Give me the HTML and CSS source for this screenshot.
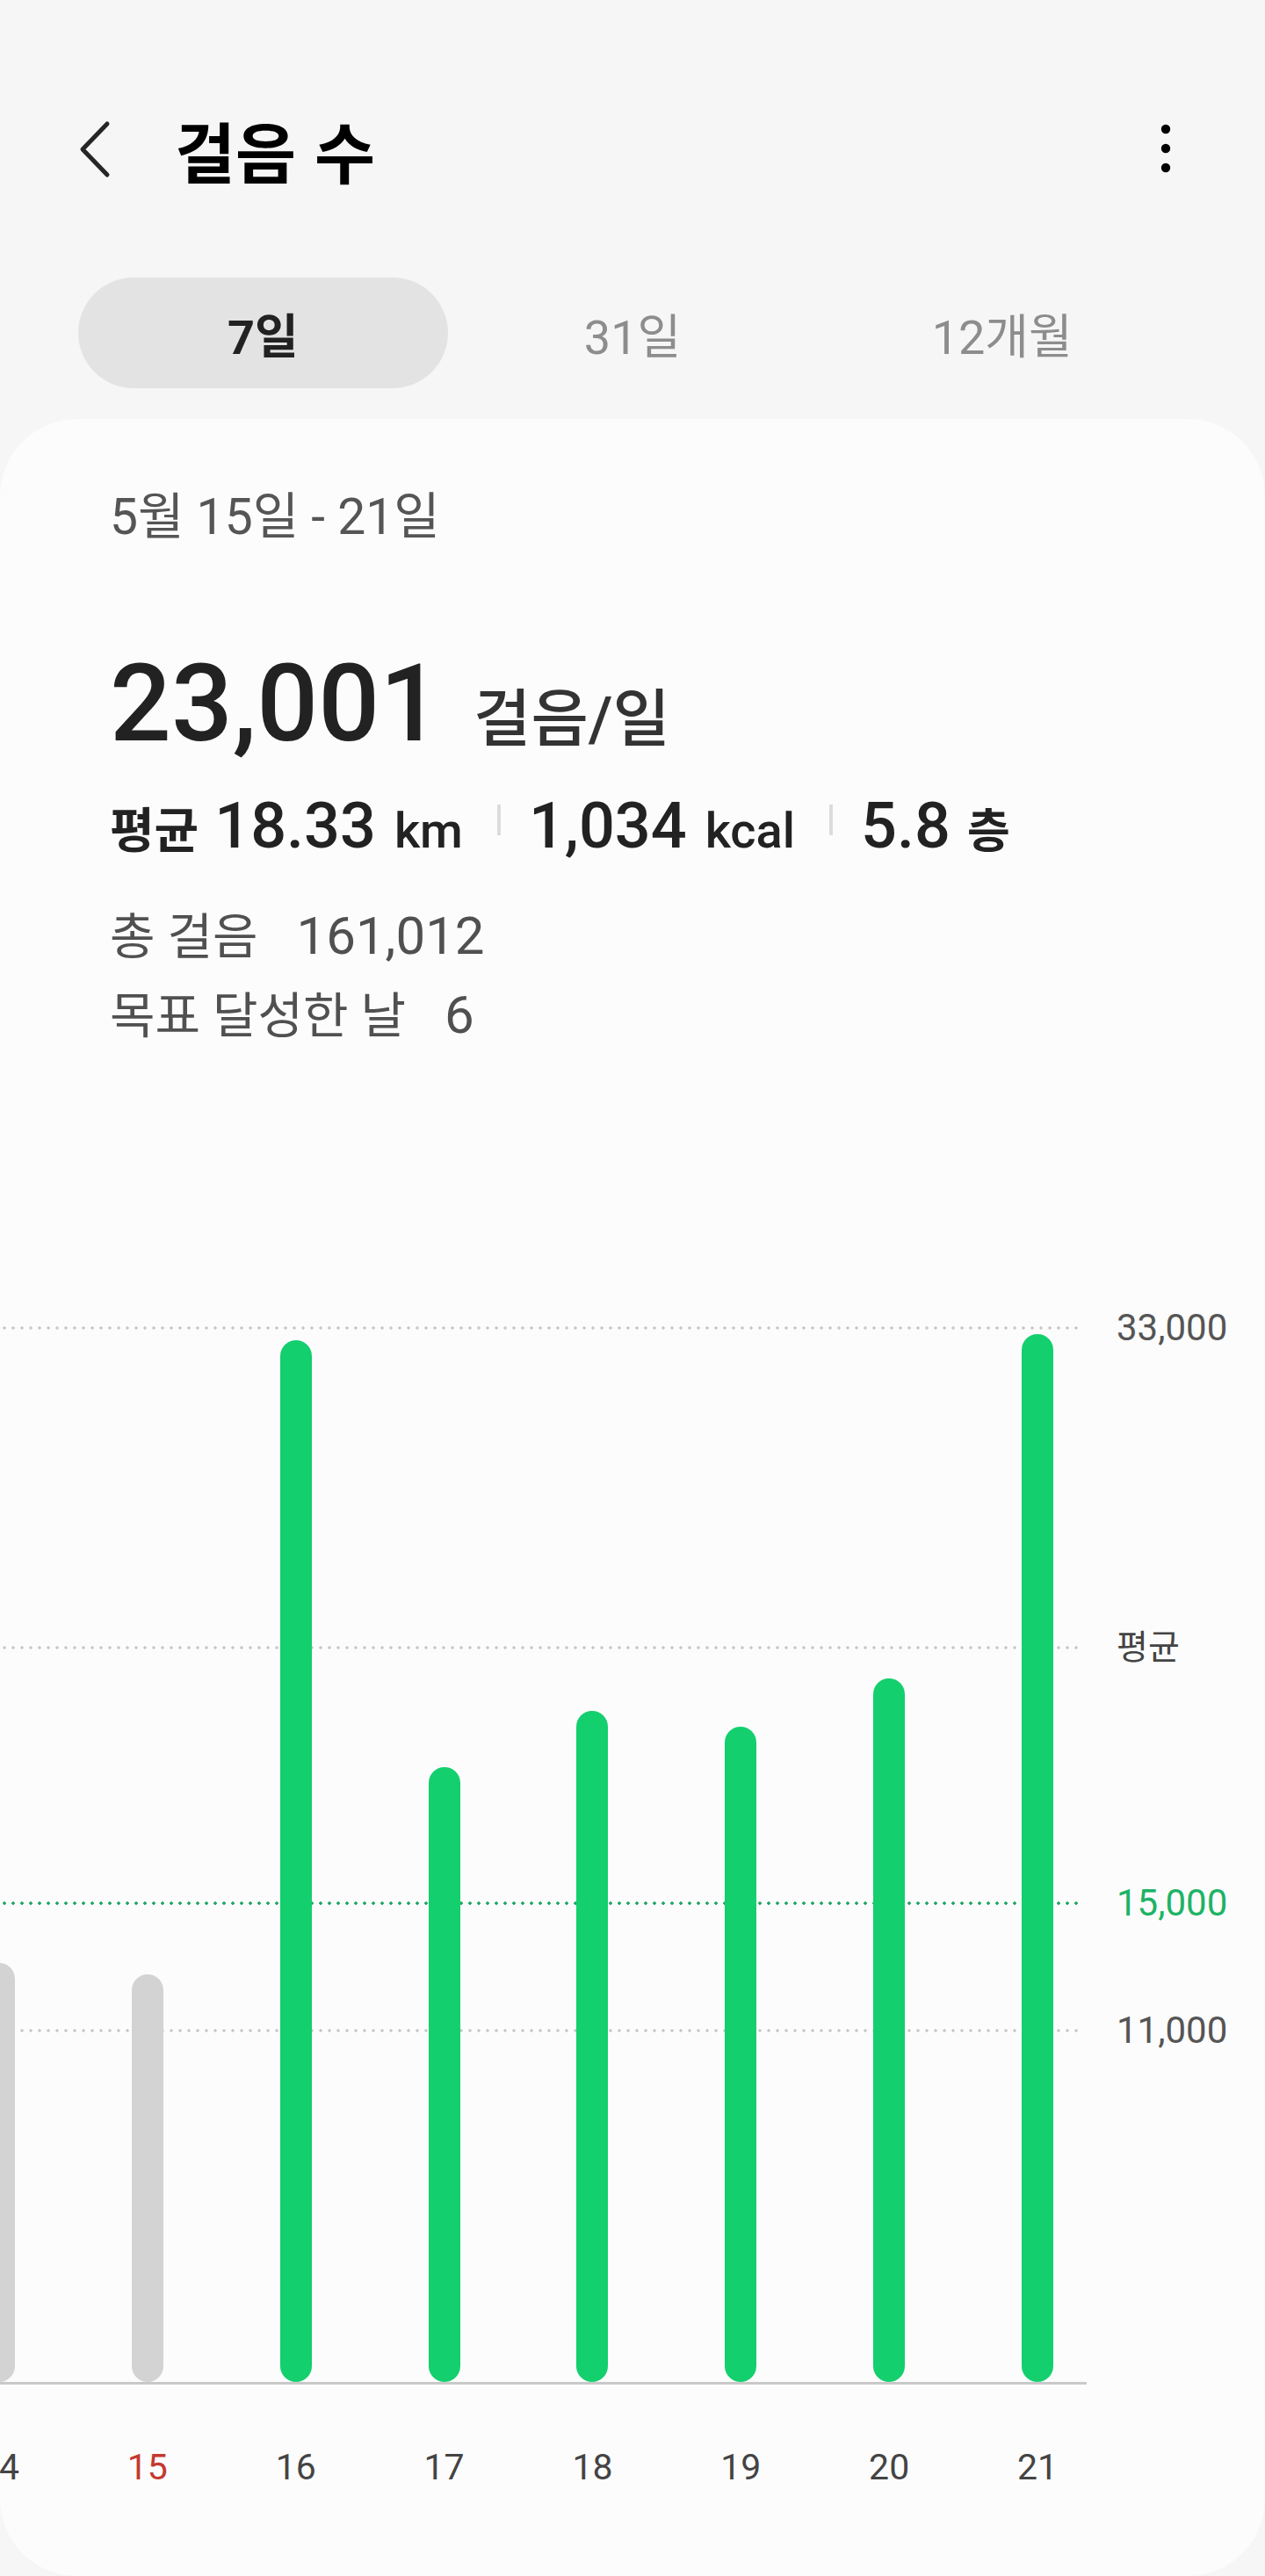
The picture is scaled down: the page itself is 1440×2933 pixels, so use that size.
FILE: index.html
```html
<!DOCTYPE html>
<html lang="ko">
<head>
<meta charset="utf-8">
<title>걸음 수</title>
<link rel="stylesheet" href="styles.css">
</head>
<body>
<div class="screen">
  <header class="appbar">
    <div class="back" aria-label="뒤로">
      <svg width="40" height="70" viewBox="0 0 40 70"><polyline points="34,6 6,35 34,64" fill="none" stroke="#262626" stroke-width="5" stroke-linecap="round" stroke-linejoin="round"/></svg>
    </div>
    <h1 class="title">걸음 수</h1>
    <div class="more" aria-label="더보기">
      <svg width="20" height="60" viewBox="0 0 20 60"><circle cx="10" cy="7" r="5.2"/><circle cx="10" cy="29" r="5.2"/><circle cx="10" cy="51" r="5.2"/></svg>
    </div>
  </header>

  <nav class="tabs">
    <div class="tab active">7일</div>
    <div class="tab">31일</div>
    <div class="tab">12개월</div>
  </nav>

  <main class="card">
    <section class="summary">
      <div class="date">5월 15일 - 21일</div>
      <div class="headline"><span class="big">23,001</span><span class="unit">걸음/일</span></div>
      <div class="stats"><span class="k">평균</span><span class="v first">18.33</span><span class="u">km</span><i class="sep"></i><span class="v">1,034</span><span class="u">kcal</span><i class="sep"></i><span class="v">5.8</span><span class="u ko">층</span></div>
      <div class="totals">
        <div class="row"><span class="label">총 걸음</span><span class="val">161,012</span></div>
        <div class="row"><span class="label">목표 달성한 날</span><span class="val">6</span></div>
      </div>
    </section>

    <section class="chart">
      <div class="plot">
        <div class="gline" style="top:111px"></div>
        <div class="gline" style="top:475px"></div>
        <div class="gline goal" style="top:766px"></div>
        <div class="gline" style="top:911px"></div>
        <div class="bars">
          <div class="bar off" style="height:477px"></div>
          <div class="bar off" style="height:464px"></div>
          <div class="bar" style="height:1186px"></div>
          <div class="bar" style="height:700px"></div>
          <div class="bar" style="height:764px"></div>
          <div class="bar" style="height:746px"></div>
          <div class="bar" style="height:801px"></div>
          <div class="bar" style="height:1193px"></div>
        </div>
      </div>
      <div class="ylabel" style="top:111px">33,000</div>
      <div class="ylabel ko" style="top:475px">평균</div>
      <div class="ylabel goal" style="top:766px">15,000</div>
      <div class="ylabel" style="top:911px">11,000</div>
      <div class="days">
        <span>14</span><span class="sun">15</span><span>16</span><span>17</span><span>18</span><span>19</span><span>20</span><span>21</span>
      </div>
    </section>
  </main>
</div>
</body>
</html>
```

FILE: styles.css
```css
* { box-sizing: border-box; }

html, body {
  margin: 0;
  padding: 0;
}

body {
  width: 1440px;
  height: 2933px;
  overflow: hidden;
  background: #f6f6f6;
  font-family: Roboto, "Noto Sans CJK KR", sans-serif;
  color: #222;
}

.screen {
  padding-top: 100px;
}

/* App bar */
.appbar {
  display: flex;
  align-items: center;
  height: 140px;
  padding-left: 88px;
  padding-right: 103px;
}

.back, .more {
  display: flex;
  align-items: center;
}

.more svg { fill: #000; }

.title {
  margin: 0 0 0 71px;
  font-family: "Noto Sans CJK KR", sans-serif;
  font-size: 75px;
  line-height: 1;
  font-weight: 700;
  color: #000;
}

.more { margin-left: auto; }

/* Tabs */
.tabs {
  display: grid;
  grid-template-columns: repeat(3, 1fr);
  margin: 76px 89px 0;
  height: 126px;
}

.tab {
  display: flex;
  align-items: center;
  justify-content: center;
  border-radius: 63px;
  font-size: 54px;
  color: #8d8d8d;
}

.tab.active {
  background: #e3e3e3;
  color: #222;
  font-weight: 700;
}

/* Card */
.card {
  margin-top: 35px;
  height: 2456px;
  background: #fcfcfc;
  border-radius: 88px;
  overflow: hidden;
}

.summary {
  padding: 77px 0 0 125px;
}

.date {
  font-size: 57px;
  line-height: 70px;
  color: #555;
}

.headline {
  display: flex;
  align-items: baseline;
  margin-top: 116px;
}

.big {
  font-size: 123px;
  line-height: 1;
  font-weight: 500;
  color: #222;
}

.unit {
  margin-left: 37px;
  font-size: 71px;
  line-height: 1;
  font-weight: 500;
  color: #333;
}

.stats {
  margin-top: 38px;
  font-size: 72px;
  line-height: 80px;
  font-weight: 500;
  color: #222;
  white-space: nowrap;
}

.stats .k {
  font-size: 55px;
  font-weight: 700;
}

.stats .v.first { margin-left: 18px; }

.stats .u {
  margin-left: 21px;
  font-size: 56px;
}

.stats .u.ko {
  margin-left: 19px;
  font-size: 53px;
  font-weight: 700;
}

.stats .sep {
  display: inline-block;
  width: 4px;
  height: 35px;
  margin: 0 32px 14px 39px;
  background: #dcdcdc;
}

.totals {
  margin-top: 34px;
}

.row {
  display: flex;
  align-items: baseline;
  height: 90px;
  line-height: 90px;
  color: #505050;
}

.row .label { font-size: 56px; }

.row .val {
  margin-left: 44px;
  font-size: 60px;
}

/* Chart */
.chart {
  position: relative;
  margin-top: 200px;
}

.plot {
  position: relative;
  width: 1237px;
  height: 1314px;
  border-bottom: 3px solid #c9c9c9;
}

.gline {
  position: absolute;
  left: 0;
  width: 1228px;
  height: 4px;
  margin-top: -2px;
  background: radial-gradient(circle, #c6c6c6 1.4px, transparent 1.9px) 0 0 / 10px 4px repeat-x;
}

.gline.goal {
  background: radial-gradient(circle, #1da862 1.5px, transparent 2px) 0 0 / 10px 4px repeat-x;
}

.bars {
  position: relative;
  height: 100%;
  display: grid;
  grid-template-columns: repeat(8, 168.86px);
  align-items: end;
  justify-items: center;
  margin-left: -85.43px;
}

.bar {
  width: 36px;
  border-radius: 18px;
  background: #13cf6e;
}

.bar.off { background: #d3d3d3; }

.ylabel {
  position: absolute;
  left: 1271px;
  transform: translateY(-50%);
  font-size: 42px;
  line-height: 1;
  color: #555;
}

.ylabel.ko { font-size: 39px; color: #444; }
.ylabel.goal { color: #1db366; }

.days {
  display: grid;
  grid-template-columns: repeat(8, 168.86px);
  margin-left: -85.43px;
  margin-top: 64px;
  font-size: 41px;
  line-height: 60px;
  color: #444;
  text-align: center;
}

.days .sun { color: #c4392f; }
```
